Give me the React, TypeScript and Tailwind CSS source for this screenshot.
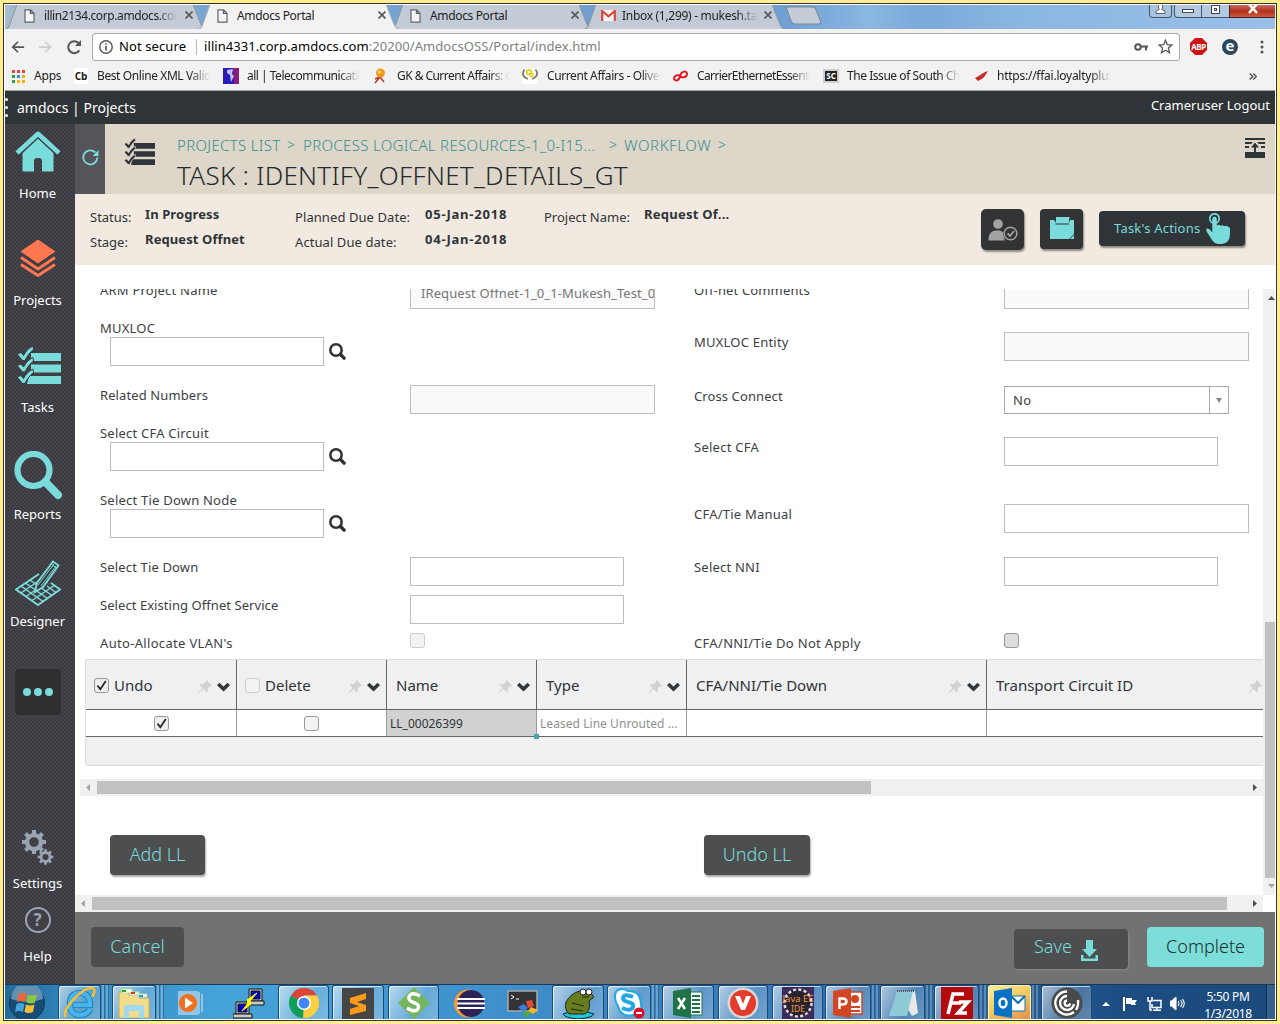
import React from 'react';

type Kids = { children?: React.ReactNode };

const Doc = () => (
  <svg className="shrink-0" width="11" height="14" viewBox="0 0 11 14" fill="#f4f4f4" stroke="#5f6368" strokeWidth="1.2">
    <path d="M1 .8h5.6L10 4.2v9H1zM6.4 1v3.4H10" />
  </svg>
);

const Gmail = () => (
  <svg className="shrink-0" width="15" height="11" viewBox="0 0 15 11">
    <path d="M1 0h13v11H1z" fill="#f5f5f5" />
    <path d="M1.2 11V1l6.3 5.4L13.8 1v10" fill="none" stroke="#d54b3d" strokeWidth="2.2" />
  </svg>
);

function Tab({ title, width, active, icon, className, titleClass }: { title: string; width: string; active?: boolean; icon?: React.ReactNode; className?: string; titleClass: string }) {
  return (
    <div className={`relative h-full shrink-0 ${width} ${active ? 'z-10' : ''} ${className ?? ''}`}>
      <svg className="absolute inset-0 h-full w-full" viewBox="0 0 200 24" preserveAspectRatio="none">
        <path d="M-1 24.5C4 24 4 21 6 16L12 -1H186L193 17C195 22 196 24 201 24.5" fill={active ? '#f2f2f2' : '#c3ccd6'} stroke={active ? '#aab3bd' : '#8f9aa6'} strokeWidth="1" />
      </svg>
      <div className="relative flex h-[21px] items-center pl-[19px]">
        {icon ?? <Doc />}
        <span className={`overflow-hidden whitespace-nowrap text-[12px] leading-[20px] text-[#222] ${titleClass}`}>{title}</span>
        <svg className="absolute right-[14px] top-[6px]" width="8" height="8" viewBox="0 0 8 8" stroke="#5a5a5a" strokeWidth="1.7">
          <path d="M.5.5l7 7M7.500.5l-7 7" />
        </svg>
      </div>
    </div>
  );
}

function TabStrip() {
  return (
    <div className="relative flex h-[24px] shrink-0 overflow-hidden bg-[linear-gradient(90deg,#a9bccb_0,#7fa9d3_4%,#6c9bd0_60%,#8ab6e2_68%,#7ba9d8_72%,#8ab6e2_80%,#9ac0e8_100%)]">
      <Tab title="illin2134.corp.amdocs.com" width="w-[202px]" className="ml-[0px]" titleClass="ml-[9px] w-[133px] tracking-[-0.4px] [mask-image:linear-gradient(90deg,#000_85%,transparent)]" />
      <Tab title="Amdocs Portal" width="w-[202px]" active className="ml-[-9px]" titleClass="ml-[9px] tracking-[-0.35px]" />
      <Tab title="Amdocs Portal" width="w-[202px]" className="ml-[-9px]" titleClass="ml-[9px] tracking-[-0.35px]" />
      <Tab title="Inbox (1,299) - mukesh.tan" width="w-[202px]" className="ml-[-9px]" icon={<span className="ml-[-2px]"><Gmail /></span>} titleClass="ml-[6px] w-[136px] tracking-[-0.3px] [mask-image:linear-gradient(90deg,#000_85%,transparent)]" />
      <svg className="ml-[-1px] mt-[1px]" width="37" height="19" viewBox="0 0 35 18">
        <path d="M1 1h25q2 0 3 2l5 12q0 2-2 2H9q-2 0-3-2z" fill="#c3ccd6" stroke="#76889b" />
      </svg>
      <div className="ml-auto flex h-[13px] text-white">
        <div className="flex w-[23px] justify-center rounded-b border border-t-0 border-[#44566b] bg-[#a9c2de]">
          <svg width="11" height="9" viewBox="0 0 11 9" fill="#fff" stroke="#445" strokeWidth=".8"><path d="M3.500-1h4v4l-.8 1.500L10 6v2.500H1V6l3.300-1.500L3.500 3z" /></svg>
        </div>
        <div className="ml-[2px] flex w-[28px] justify-center rounded-bl border border-t-0 border-[#44566b] bg-[#b3c9e0] pt-[4px]">
          <div className="h-[4px] w-[12px] border border-[#445] bg-white" />
        </div>
        <div className="flex w-[27px] justify-center border-b border-[#44566b] bg-[#b3c9e0]">
          <div className="h-[9px] w-[9px] border border-[#445] bg-white p-[2px]"><div className="h-full w-full border border-[#445]" /></div>
        </div>
        <div className="flex w-[46px] justify-center border-b border-l border-[#44202b] bg-[linear-gradient(#c77063,#b4301c_50%,#cf5a3c)]">
          <svg width="12" height="9" viewBox="0 0 12 9" stroke="#fff" strokeWidth="2.6"><path d="M2-1l8 9M10-1L2 8" /></svg>
        </div>
      </div>
    </div>
  );
}

function Toolbar() {
  return (
    <div className="flex h-[33px] shrink-0 items-center bg-[#f2f2f2] pt-[2px]">
      <svg className="ml-[6px]" width="14" height="14" viewBox="0 0 16 14" fill="none" stroke="#555" strokeWidth="2"><path d="M15 7H2M8 1L2 7l6 6" /></svg>
      <svg className="ml-[14px]" width="14" height="14" viewBox="0 0 16 14" fill="none" stroke="#ccc" strokeWidth="2"><path d="M0 7h13M7 1l6 6-6 6" /></svg>
      <svg className="ml-[13px]" width="16" height="16" viewBox="0 0 16 16" fill="none" stroke="#555" strokeWidth="2"><path d="M13.300 11.400A6 6 0 1 1 12.600 4" /><path d="M15 1v6H9z" fill="#555" stroke="none" /></svg>
      <div className="ml-[10px] flex h-[28px] w-[1088px] items-center rounded-[3px] border border-[#a9a9a9] bg-white text-[13px]">
        <svg className="ml-[6px]" width="14" height="14" viewBox="0 0 14 14" fill="none" stroke="#555" strokeWidth="1.400"><circle cx="7" cy="7" r="6.200" /><path d="M7 6v4.500M7 3.200v1.500" strokeWidth="1.700" /></svg>
        <span className="ml-[6px] tracking-[0.1px] text-black">Not secure</span>
        <span className="ml-[10px] h-[16px] w-px bg-[#bbb]" />
        <span className="ml-[7px] whitespace-nowrap tracking-[0.06px] text-black">illin4331.corp.amdocs.com<span className="text-[#808080]">:20200/AmdocsOSS/Portal/index.html</span></span>
        <svg className="ml-auto" width="14" height="8" viewBox="0 0 14 8" fill="none" stroke="#555" strokeWidth="2"><circle cx="4" cy="4" r="2.800" /><path d="M7 3.500h7M12 3.500v4" /></svg>
        <svg className="ml-[10px] mr-[6px]" width="15" height="15" viewBox="0 0 15 15" fill="none" stroke="#555" strokeWidth="1.300"><path d="M7.500 1.300l1.800 4.300 4.600.4-3.500 3.100 1.100 4.600-4-2.500-4 2.500 1.100-4.600L1.100 6l4.600-.4z" /></svg>
      </div>
      <div className="ml-[10px] flex h-[17px] w-[17px] items-center justify-center bg-[#cf1212] text-[8px] font-bold tracking-[-0.4px] text-white [clip-path:polygon(30%_0,70%_0,100%_30%,100%_70%,70%_100%,30%_100%,0_70%,0_30%)]">ABP</div>
      <div className="ml-[15px] flex h-[16px] w-[16px] items-center justify-center rounded-full bg-[#2b475c] pb-[3px] text-[15px] font-bold leading-none text-white">e</div>
      <svg className="ml-[22px]" width="4" height="14" viewBox="0 0 4 14" fill="#555"><circle cx="2" cy="2" r="1.500" /><circle cx="2" cy="7" r="1.500" /><circle cx="2" cy="12" r="1.500" /></svg>
    </div>
  );
}

function Bookmark({ icon, width, children, text }: { icon: React.ReactNode; width: string; text: string } & Kids) {
  return (
    <div className={`flex shrink-0 items-center ${width}`}>
      <span className="flex w-[16px] shrink-0 items-center justify-center">{icon}</span>
      <span className={`ml-[8px] overflow-hidden whitespace-nowrap ${text}`}>{children}</span>
    </div>
  );
}

const fade = '[mask-image:linear-gradient(90deg,#000_82%,transparent)]';

function Bookmarks() {
  const dots = ['#e8453c', '#e8453c', '#e8453c', '#31a350', '#4285f4', '#f4b400', '#31a350', '#f4b400', '#f4b400'];
  return (
    <div className="flex h-[29px] shrink-0 items-center border-b border-[#a0a0a0] bg-[#f2f2f2] pl-[5px] text-[12px] leading-[16px] text-[#222]">
      <Bookmark width="w-[63px]" text="tracking-[-0.2px]" icon={<span className="grid grid-cols-3 gap-[2px]">{dots.map((c, i) => <i key={i} className="h-[3px] w-[3px]" style={{ background: c }} />)}</span>}>Apps</Bookmark>
      <Bookmark width="w-[150px]" text={`w-[113px] tracking-[-0.4px] ${fade}`} icon={<span className="h-[16px] bg-white px-px text-[10px] font-bold leading-[16px]">Cb</span>}>Best Online XML Validator</Bookmark>
      <Bookmark width="w-[149px]" text={`w-[113px] tracking-[-0.5px] ${fade}`} icon={<svg width="16" height="16"><path d="M0 0h16v16H0z" fill="#2d1cb4" /><path d="M10 0h6v16h-5z" fill="#8b1c7c" /><path d="M4 2l6-1-1 5 2 2-3 6-1-7-3-2z" fill="#b9c3ff" /></svg>}>all | Telecommunications</Bookmark>
      <Bookmark width="w-[150px]" text={`ml-[9px] w-[112px] tracking-[-0.55px] ${fade}`} icon={<svg width="14" height="16" fill="none"><path d="M2 11l5-2 4 5M7 9l-5 6" stroke="#b93a2e" strokeWidth="1.600" /><circle cx="7.500" cy="5" r="4.500" fill="#f29a20" /><circle cx="6.500" cy="4" r="1.500" fill="#ffd76b" /></svg>}>GK &amp; Current Affairs: G</Bookmark>
      <Bookmark width="w-[150px]" text={`ml-[9px] w-[114px] tracking-[-0.4px] ${fade}`} icon={<svg width="16" height="16" fill="none"><path d="M0 0h16v16H0z" fill="#fff" /><path d="M2.500 1.500C-1 6 2 10 6 11M13.500 1.500c3.500 4.500.5 8.500-3.500 9.500" stroke="#75795c" strokeWidth="1.800" /><circle cx="7" cy="4" r="2.200" stroke="#e9cb1a" strokeWidth="1.800" /><circle cx="9.500" cy="7" r="1.700" stroke="#e9cb1a" strokeWidth="1.400" /></svg>}>Current Affairs - Oliveboard</Bookmark>
      <Bookmark width="w-[151px]" text={`ml-[9px] w-[113px] tracking-[-0.6px] ${fade}`} icon={<svg width="16" height="12" fill="none" stroke="#e2131b" strokeWidth="1.900"><path d="M8 6c-3-2-6 0-6 2.500S7 12 8 6c1-5 7-6 7-2S9 8 8 6z" /></svg>}>CarrierEthernetEssentials</Bookmark>
      <Bookmark width="w-[150px]" text={`w-[113px] tracking-[-0.45px] ${fade}`} icon={<span className="bg-[#222] px-[1px] text-[8px] font-bold leading-[10px] text-white outline outline-2 outline-[#d0d0d0]">SC</span>}>The Issue of South China</Bookmark>
      <Bookmark width="w-[150px]" text={`w-[114px] tracking-[-0.25px] ${fade}`} icon={<svg width="13" height="12"><path d="M13 1C9 2 6 5 0 8l3 3c4-2 7-4 8-7z" fill="#cc2a28" /></svg>}>https://ffai.loyaltyplus.aero</Bookmark>
      <svg className="ml-auto mr-[18px]" width="8" height="7" viewBox="0 0 8 7" fill="none" stroke="#555" strokeWidth="1.500"><path d="M.7.500l3 3-3 3M4.300.500l3 3-3 3" /></svg>
    </div>
  );
}

const Checklist = ({ w, h, color, back }: { w: number; h: number; color: string; back: string }) => (
  <svg width={w} height={h} viewBox="0 0 44 38">
    <path d="M14 7h30v8H14zM14 18.500h30v8H14zM12 30h32v8H10z" fill={color} />
    {[0, 11.500, 23].map((y) => (
      <path key={y} d={`M0 ${y + 8}l4-1.500 2.500 3C9 ${y + 5} 11.500 ${y + 2} 16 ${y}l.5 3.500C13 ${y + 6.500} 10 ${y + 10} 8 ${y + 14.500}H5.500z`} fill={color} stroke={back} strokeWidth="1" />
    ))}
  </svg>
);

function SideItem({ label, children }: { label: string } & Kids) {
  return (
    <div className="flex h-[107px] w-full shrink-0 flex-col items-center">
      <div className="flex h-[59px] items-center justify-center">{children}</div>
      <div className="text-[13px] leading-[20px] text-white">{label}</div>
    </div>
  );
}

const AQUA = '#7adcda';

function Gear({ cx, cy, r }: { cx: number; cy: number; r: number }) {
  return (
    <g transform={`translate(${cx} ${cy})`}>
      <circle r={r * 0.58} fill="none" stroke="#9aa3b1" strokeWidth={r * 0.36} />
      {[0, 45, 90, 135, 180, 225, 270, 315].map((a) => (
        <rect key={a} x={-r * 0.17} y={-r} width={r * 0.34} height={r * 0.36} fill="#9aa3b1" transform={`rotate(${a})`} />
      ))}
    </g>
  );
}

function Sidebar() {
  return (
    <nav className="flex w-[70px] shrink-0 flex-col items-center bg-[#3b3a40] bg-[radial-gradient(#45444b_0.8px,transparent_1px),radial-gradient(#45444b_0.8px,transparent_1px)] bg-[length:4px_4px] bg-[position:0_0,2px_2px] pr-[5px]">
      <div className="flex w-[65px] flex-1 flex-col items-center">
        <SideItem label="Home">
          <svg className="mt-[-5px]" width="46" height="41" viewBox="0 0 46 41" fill={AQUA}>
            <path d="M7.500 21L23 7l15.500 14v18.500q0 1-1 1H27V30q0-3-3-3h-2q-3 0-3 3v10.500H8.500q-1 0-1-1z" />
            <path d="M1 25L23 4.500l22 20.500" fill="none" stroke="#3b3a40" strokeWidth="4.500" />
            <path d="M2 22L23 2.800 44 22" fill="none" stroke={AQUA} strokeWidth="4.600" strokeLinejoin="round" />
          </svg>
        </SideItem>
        <SideItem label="Projects">
          <svg className="mt-[-6px]" width="36" height="38" viewBox="0 0 36 38">
            <path d="M18 .5l17.500 12L18 24.500.5 12.500z" fill="#ff7850" />
            <path d="M1 18.500L18 30l17-11.500M1 25.500L18 36.500l17-11" fill="none" stroke="#ff7850" strokeWidth="3" />
          </svg>
        </SideItem>
        <SideItem label="Tasks"><div className="mt-[-6px] pl-[2px]"><Checklist w={44} h={38} color={AQUA} back="#3b3a40" /></div></SideItem>
        <SideItem label="Reports">
          <svg className="ml-[1px] mt-[2px]" width="49" height="49" viewBox="0 0 49 49" fill="none" stroke={AQUA}>
            <circle cx="19.500" cy="19" r="16" strokeWidth="6.200" /><path d="M31.500 31l12.500 13" strokeWidth="8" strokeLinecap="round" />
          </svg>
        </SideItem>
        <SideItem label="Designer">
          <svg className="mt-[3px]" width="46" height="46" viewBox="0 0 46 46" fill="none" stroke={AQUA} strokeWidth="1.500">
            <path d="M24 14L1 29.500l22 15.500 22-15.500-9-6.500" strokeWidth="1.900" />
            <path d="M6 26l22 15.500M10.500 23l22 15.500M15 20l22 15.500M32 26l9 6.500M6 33l19-13M11 36.500l22-15M17 40.500l23-15.500" />
            <path d="M20 32l2-9L38 1.500l5.500 4L28 27z" fill="#3b3a40" strokeWidth="1.900" /><path d="M23 25L39 4M36 4l5.500 4M26 26L41 6" strokeWidth="1" />
          </svg>
        </SideItem>
        <div className="mt-[10px] flex h-[46px] w-[46px] shrink-0 items-center justify-center gap-[3px] rounded-[4px] bg-[#2f2f31]">
          {[0, 1, 2].map((i) => <span key={i} className="h-[8px] w-[8px] rounded-full bg-[#7adcda]" />)}
        </div>
        <svg className="mt-[115px] shrink-0" width="32" height="36" viewBox="0 0 32 36"><Gear cx={12} cy={12} r={12} /><Gear cx={23.500} cy={27} r={7.800} /></svg>
        <div className="mt-[7px] text-[13px] leading-[20px] text-white">Settings</div>
        <div className="mt-[14px] flex h-[26px] w-[26px] shrink-0 items-center justify-center rounded-full border-2 border-[#9aa3b1] text-[17px] font-bold text-[#9aa3b1]">?</div>
        <div className="mt-[13px] text-[13px] leading-[20px] text-white">Help</div>
      </div>
    </nav>
  );
}

function TaskHeader() {
  return (
    <div className="flex h-[70px] shrink-0 bg-[#ded6c8]">
      <div className="flex w-[30px] items-center justify-center bg-[#55545a] pb-[4px]">
        <svg width="17" height="17" viewBox="0 0 17 17" fill="none" stroke={AQUA} strokeWidth="1.800"><path d="M15.300 8.500a7 7 0 1 1-2-5" /><path d="M16.500 1v6h-6z" fill={AQUA} stroke="none" /></svg>
      </div>
      <div className="ml-[19px] mt-[14px] shrink-0"><Checklist w={31} h={27} color="#2f3438" back="#ded6c8" /></div>
      <div className="ml-[22px] flex-1 whitespace-nowrap">
        <div className="mt-[11px] flex text-[15px] font-light leading-[20px] text-[#358f91]">
          <span className="w-[110px] tracking-[0.33px]">PROJECTS LIST</span>
          <span className="w-[16px] text-[14px]">&gt;</span>
          <span className="w-[306px] tracking-[0.33px]">PROCESS LOGICAL RESOURCES-1_0-I15...</span>
          <span className="w-[15px] text-[14px]">&gt;</span>
          <span className="w-[94px] tracking-[0.6px]">WORKFLOW</span>
          <span className="text-[14px]">&gt;</span>
        </div>
        <h1 className="mt-[2px] text-[26px] font-light leading-[36px] tracking-[0.3px] text-[#24292d]">TASK : IDENTIFY_OFFNET_DETAILS_GT</h1>
      </div>
      <svg className="mr-[10px] mt-[14px] shrink-0" width="20" height="20" viewBox="0 0 20 20" fill="#2f3438"><path d="M0 0h20v2H0zM0 4h8l-2 2H0zM12 4h8v2h-6zM0 8h4v2H0zM16 8h4v2h-4zM0 14h20v6H0zM10 4.500l4 5h-3V14H9V9.500H6z" /></svg>
    </div>
  );
}

function InfoBar() {
  return (
    <div className="flex h-[71px] shrink-0 whitespace-nowrap bg-[#f2eae0] pl-[15px] pt-[8px] text-[13px] text-[#2f3438]">
      <div className="w-[55px] pt-[3px] leading-[25px]"><div>Status:</div><div>Stage:</div></div>
      <div className="w-[150px] font-bold leading-[25px] tracking-[0.1px]"><div>In Progress</div><div>Request Offnet</div></div>
      <div className="w-[130px] pt-[3px] leading-[25px] tracking-[0.08px]"><div>Planned Due Date:</div><div>Actual Due date:</div></div>
      <div className="w-[119px] font-bold leading-[25px] tracking-[0.8px]"><div>05-Jan-2018</div><div>04-Jan-2018</div></div>
      <div className="w-[100px] pt-[3px] leading-[25px]">Project Name:</div>
      <div className="flex-1 font-bold leading-[25px] tracking-[0.25px]">Request Of...</div>
      <div className="mr-[30px] mt-[7px] flex items-start">
        <div className="flex h-[41px] w-[43px] items-center justify-center rounded-[5px] bg-[#323335] shadow-[1px_2px_2px_#8d8880]">
          <svg width="30" height="22" viewBox="0 0 30 22"><circle cx="10" cy="5" r="4.800" fill="#a3a3a3" /><path d="M.5 21.500c0-7 3-9.500 7-10h4c4 1 5 3 5 10z" fill="#a3a3a3" /><circle cx="22.500" cy="14.500" r="7.500" fill="#323335" /><circle cx="22.500" cy="14.500" r="6.300" fill="none" stroke="#a3a3a3" strokeWidth="1.500" /><path d="M19.500 14.500l2.500 2.500 4-5" stroke="#a3a3a3" strokeWidth="1.800" fill="none" /></svg>
        </div>
        <div className="ml-[16px] flex h-[40px] w-[43px] items-center justify-center rounded-[4px] bg-[#323335] pb-[2px] shadow-[1px_2px_2px_#8d8880]">
          <svg width="24" height="22" viewBox="0 0 24 22"><path d="M0 3h24v14l-5 5H0z" fill={AQUA} /><path d="M20 22l4-4v4z" fill={AQUA} /><path d="M4.500 3h15.500l-1 4.500H5.500z" fill="#323335" /><path d="M6 0h14l-1 2.500v2l2 2H4l2-2v-2z" fill={AQUA} /></svg>
        </div>
        <div className="ml-[16px] mt-[2px] flex h-[35px] w-[146px] items-center rounded-[4px] bg-[#2f3438] pl-[15px] text-[13px] text-[#7adcda] shadow-[1px_2px_2px_#8d8880]">
          <span className="w-[92px] pt-px tracking-[0.2px]">Task's Actions</span>
          <svg width="24" height="31" viewBox="0 0 24 31" fill={AQUA}><circle cx="8.500" cy="5.500" r="4.700" fill="none" stroke={AQUA} strokeWidth="1.700" /><path d="M6.300 6q0-2.500 2.200-2.500T10.800 6v6.500q2-1.500 3.700.3 2-1.200 3.700.5 2.300-1.300 4 .7 1.800-.5 1.800 2v5q0 9-8 10-7 1-10-4L.6 18.500Q-.5 15 2 15.500q2 .5 4.300 4z" /></svg>
        </div>
      </div>
    </div>
  );
}

const INPUT = 'h-[29px] shrink-0 border border-[#bdbdbd]';

function Row({ label, h, children, text = 'tracking-[0.15px]' }: { label: string; h: string; text?: string } & Kids) {
  return (
    <div className={`flex shrink-0 items-start ${h}`}>
      <label className={`w-[310px] shrink-0 text-[13px] leading-[20px] ${text}`}>{label}</label>
      {children}
    </div>
  );
}

function SearchRow({ label, h }: { label: string; h: string }) {
  return (
    <div className={`shrink-0 ${h}`}>
      <label className="block h-[19px] text-[13px] leading-[20px] tracking-[0.22px]">{label}</label>
      <div className="flex items-center pl-[10px]">
        <div className={`${INPUT} w-[214px] bg-white`} />
        <svg className="ml-[5px] mt-[-1px]" width="17" height="17" viewBox="0 0 17 17" fill="none" stroke="#2f3134"><circle cx="7" cy="7" r="5.700" strokeWidth="2.500" /><path d="M11.500 11.500l3.600 3.600" strokeWidth="3.400" strokeLinecap="round" /></svg>
      </div>
    </div>
  );
}

function Check({ on, tone = 'border-[#a8a8a8] bg-[#eee]' }: { on?: boolean; tone?: string }) {
  return (
    <span className={`flex h-[15px] w-[15px] shrink-0 items-center justify-center rounded-[3px] border ${tone}`}>
      {on && <svg width="11" height="11" viewBox="0 0 11 11" fill="none" stroke="#222" strokeWidth="1.700"><path d="M1.500 5.500l2.800 3.700L9.800 1" /></svg>}
    </span>
  );
}

function Form() {
  return (
    <div className="mt-[-9px] flex h-[379px] shrink-0 pl-[25px] text-[#3c4044]">
      <div className="w-[594px] shrink-0">
        <Row label="ARM Project Name" h="h-[38px]" text="tracking-[0.22px]"><div className={`${INPUT} w-[245px] overflow-hidden whitespace-nowrap bg-[#fafafa] pl-[10px] text-[13px] leading-[25px] tracking-[0.1px] text-[#777]`}>IRequest Offnet-1_0_1-Mukesh_Test_01</div></Row>
        <SearchRow label="MUXLOC" h="h-[67px]" />
        <Row label="Related Numbers" h="h-[38px]" text="tracking-[0.1px]"><div className={`${INPUT} w-[245px] bg-[#fafafa]`} /></Row>
        <SearchRow label="Select CFA Circuit" h="h-[67px]" />
        <SearchRow label="Select Tie Down Node" h="h-[67px]" />
        <Row label="Select Tie Down" h="h-[38px]"><div className={`${INPUT} w-[214px]`} /></Row>
        <Row label="Select Existing Offnet Service" h="h-[38px]" text="tracking-[0.06px]"><div className={`${INPUT} w-[214px]`} /></Row>
        <Row label="Auto-Allocate VLAN's" h="h-[26px]" text="tracking-[0.32px]"><Check tone="border-[#ccc] bg-[#f3f3f3]" /></Row>
      </div>
      <div className="shrink-0">
        <Row label="Off-net Comments" h="h-[52px]"><div className={`${INPUT} w-[245px] bg-[#fafafa]`} /></Row>
        <Row label="MUXLOC Entity" h="h-[54px]" text="tracking-[0.22px]"><div className={`${INPUT} w-[245px] bg-[#fafafa]`} /></Row>
        <Row label="Cross Connect" h="h-[51px]" text="tracking-[0.1px]">
          <div className="flex h-[28px] w-[225px] border border-[#aaa] text-[13px] leading-[27px]">
            <span className="flex-1 pl-[8px] tracking-[0.4px]">No</span>
            <span className="flex w-[19px] items-center justify-center border-l border-[#aaa]"><svg width="6" height="5"><path d="M0 0h6L3 5z" fill="#888" /></svg></span>
          </div>
        </Row>
        <Row label="Select CFA" h="h-[67px]" text="tracking-[0.25px]"><div className={`${INPUT} w-[214px]`} /></Row>
        <Row label="CFA/Tie Manual" h="h-[53px]" text="tracking-[0.22px]"><div className={`${INPUT} w-[245px]`} /></Row>
        <Row label="Select NNI" h="h-[76px]" text="tracking-[0.22px]"><div className={`${INPUT} w-[214px]`} /></Row>
        <Row label="CFA/NNI/Tie Do Not Apply" h="h-[26px]" text="tracking-[0.32px]"><Check tone="border-[#999] bg-[#ddd]" /></Row>
      </div>
    </div>
  );
}

const Pin = () => (
  <svg width="14" height="14" viewBox="0 0 14 14" fill="#d2d2d2"><path d="M8.500 0L14 5.500l-1 1h-1.500L9.500 9l.3 2.500-1 1L5.500 9 .5 13.500 0 13l4.500-5L1.500 5l1-1 2.500.3L8 2V.8z" /></svg>
);

function HeadCell({ label, w, check, last }: { label: string; w: string; check?: React.ReactNode; last?: boolean }) {
  return (
    <div className={`flex shrink-0 items-center pl-[9px] pt-[1px] ${w} ${last ? '' : 'border-r border-[#666]'}`}>
      {check && <span className="ml-[-1px] mr-[5px]">{check}</span>}
      <span className="flex-1 text-[15px] leading-[22px]">{label}</span>
      <span className="mt-[3px]"><Pin /></span>
      {last ? <span className="w-px" /> : <svg className="ml-[5px] mr-[6px] mt-[3px]" width="13" height="10" viewBox="0 0 13 10" fill="none" stroke="#33373a" strokeWidth="3.600"><path d="M1.200 2l5.300 5L11.800 2" /></svg>}
    </div>
  );
}

const CELL = 'shrink-0 flex items-center border-r border-[#999]';

function Table() {
  return (
    <div className="ml-[10px] shrink-0 rounded-l-[3px] border border-r-0 border-[#ddd] bg-[#f0f0f0] text-[#2f3438]">
      <div className="flex h-[50px] border-b border-[#666]">
        <HeadCell label="Undo" w="w-[151px]" check={<Check on tone="border-[#999] bg-[#eee]" />} />
        <HeadCell label="Delete" w="w-[150px]" check={<Check tone="border-[#ccc] bg-[#f3f3f3]" />} />
        <HeadCell label="Name" w="w-[150px]" />
        <HeadCell label="Type" w="w-[150px]" />
        <HeadCell label="CFA/NNI/Tie Down" w="w-[300px]" />
        <HeadCell label="Transport Circuit ID" w="w-[276px]" last />
      </div>
      <div className="relative flex h-[27px] whitespace-nowrap border-b border-[#666] bg-white text-[12px]">
        <div className={`${CELL} w-[151px] justify-center`}><Check on tone="border-[#999] bg-[#eee]" /></div>
        <div className={`${CELL} w-[150px] justify-center`}><Check tone="border-[#999] bg-[#f3f3f3]" /></div>
        <div className={`${CELL} w-[150px] bg-[#d1d1d1] pl-[3px] pt-[1px]`}>LL_00026399</div>
        <div className={`${CELL} w-[150px] pl-[3px] pt-[1px] tracking-[0.05px] text-[#8f8f8f]`}>Leased Line Unrouted ...</div>
        <div className={`${CELL} w-[300px]`} />
        <span className="absolute bottom-[-3px] left-[448px] h-[5px] w-[5px] bg-[#4ba3a3]" />
      </div>
      <div className="h-[28px]" />
    </div>
  );
}

function Arrow({ d, dim }: { d: string; dim?: boolean }) {
  return <svg className="shrink-0" width="7" height="7" viewBox="0 0 7 7" fill={dim ? '#a3a3a3' : '#505050'}><path d={d} /></svg>;
}

function HScroll({ className, thumb }: { className: string; thumb: string }) {
  return (
    <div className={`flex h-[17px] shrink-0 items-center bg-[#f0f0f0] pl-[5px] ${className}`}>
      <Arrow d="M5 0v7L1 3.500z" dim />
      <div className={`ml-[5px] h-[13px] bg-[#c1c1c1] ${thumb}`} />
      <div className="ml-auto mr-[4px] flex"><Arrow d="M1 0v7l4-3.500z" /></div>
    </div>
  );
}

const BTN = 'flex items-center rounded-[4px] text-[18px] font-light leading-[20px] pb-[3px]';

function Content() {
  return (
    <div className="flex h-[647px] shrink-0 bg-white pt-[24px]">
      <div className="flex w-[1188px] shrink-0 flex-col overflow-hidden">
        <Form />
        <Table />
        <HScroll className="ml-[5px] mt-[13px]" thumb="w-[774px]" />
        <div className="mt-[39px] flex shrink-0 pl-[35px]">
          <div className={`${BTN} h-[40px] w-[95px] justify-center bg-[#4d4e50] text-[#7adcda] shadow-[1px_2px_2px_#aaa]`}>Add LL</div>
          <div className={`${BTN} ml-[499px] h-[40px] w-[106px] justify-center bg-[#4d4e50] text-[#7adcda] shadow-[1px_2px_2px_#aaa]`}>Undo LL</div>
        </div>
        <HScroll className="mt-auto" thumb="w-[1135px]" />
      </div>
      <div className="mb-[17px] flex w-[12px] shrink-0 flex-col items-end overflow-hidden bg-[#f0f0f0]">
        <div className="mt-[5px] h-[7px]"><Arrow d="M0 6h7L3.500 2z" /></div>
        <div className="mt-[321px] h-[256px] w-[10px] bg-[#c1c1c1]" />
        <div className="mt-[5px]"><Arrow d="M0 1h7L3.500 5z" dim /></div>
      </div>
    </div>
  );
}

function Footer() {
  return (
    <div className="flex h-[72px] shrink-0 items-start bg-[#727272] px-[16px] pt-[15px]">
      <div className={`${BTN} h-[40px] w-[93px] justify-center bg-[#4d4e50] text-[#7adcda]`}>Cancel</div>
      <div className={`${BTN} ml-auto mt-[2px] h-[40px] w-[114px] bg-[#4d4e50] pl-[20px] text-[#7adcda] shadow-[1px_1px_2px_#888]`}>
        <span className="w-[47px] pb-[3px]">Save</span>
        <svg className="mt-[6px]" width="17" height="21" viewBox="0 0 17 21" fill={AQUA}><path d="M5 0h7v9h4l-7.500 8L1 9h4zM0 15h2.500v3.500h12V15H17v6H0z" /></svg>
      </div>
      <div className={`${BTN} ml-[19px] mr-[-5px] h-[40px] w-[117px] justify-center bg-[#7dded9] text-[#1c2e32]`}>Complete</div>
    </div>
  );
}

function Slot({ w, on, ml, children }: { w: string; on?: boolean; ml: string } & Kids) {
  return (
    <div className={`flex h-[35px] shrink-0 items-center justify-center overflow-hidden rounded-t-[3px] border border-b-0 ${w} ${ml} ${on ? 'border-[#1b4b78] bg-[linear-gradient(120deg,#ffffffa0,#ffffff30_60%,#ffffff50)] shadow-[inset_1px_1px_0_#ffffffa0]' : 'border-transparent'}`}>
      {children}
    </div>
  );
}

const Stack = ({ n }: { n: number }) => (
  <span className="flex h-[35px] w-[10px] shrink-0 gap-[1px] pl-[1px]">
    {Array.from({ length: n }, (_, i) => <i key={i} className="h-full w-[3px] border-r border-[#1b4b78b0] bg-[#ffffff40]" />)}
  </span>
);

function Taskbar() {
  return (
    <div className="flex h-[35px] shrink-0 overflow-hidden border-t border-[#173b5c] bg-[linear-gradient(90deg,#226b99_0,#2f86bd_5%,#46a3d8_17%,#3e8fcb_40%,#3579b9_60%,#24609c_78%,#1d4d82_88%,#1c4a7c_100%)]">
      <Slot w="w-[44px]" ml="ml-[0px]">
        <svg width="36" height="36" viewBox="0 0 36 36"><circle cx="18" cy="18" r="17.500" fill="#174c77" stroke="#153a5a" /><path d="M2 14a16 16 0 0 1 32 0q-16 6-32 0z" fill="#78a3bd" opacity=".8" /><path d="M10 9q4-2 7.500 0l-1.500 8q-4-2-8 0z" fill="#f0652f" /><path d="M19 9.500q4 2 9 0l-2 8q-4 2-8.500 0z" fill="#8cc63f" /><path d="M7.500 19q4-2 8 0L14 27q-4-2-8 0z" fill="#43a5dc" /><path d="M17 19.500q4 2 8.500 0L24 27q-4 2-8.500 0z" fill="#fbc02d" /></svg>
      </Slot>
      <Slot w="w-[43px]" ml="ml-[9px]" on>
        <svg width="32" height="32" viewBox="0 0 32 32" fill="none"><path d="M26 22q-3 6-10 6Q6 28 6 17T16 6q10 0 10 12H10" stroke="#1f78b8" strokeWidth="6.200" /><path d="M26 22q-3 6-10 6Q6 28 6 17T16 6q10 0 10 12H10" stroke="#48b4ee" strokeWidth="4.400" /><path d="M2 30C-4 24 18 0 28 1q5 1 0 9" stroke="#f5bf35" strokeWidth="2.500" /></svg>
      </Slot>
      <Stack n={2} />
      <Slot w="w-[44px]" ml="ml-[1px]" on>
        <svg width="32" height="30" viewBox="0 0 32 30"><path d="M1 4h9l1 3h9l1 3h10v20H1z" fill="#f1dc8c" stroke="#cfae55" /><path d="M4 1h10v4H4zM12 4h9v3h-9zM20 6h9v3h-9z" fill="#fff" stroke="#bda" /><path d="M4 2h4v2H4z" fill="#2a2" /><path d="M13 4h4v2h-4z" fill="#d32" /><path d="M21 7h4v2h-4z" fill="#29d" /><path d="M6 30V20q0-3 3-3h14q3 0 3 3v10h-5v-7H11v7z" fill="#a2d9ef" /></svg>
      </Slot>
      <Stack n={2} />
      <Slot w="w-[46px]" ml="ml-[1px]">
        <svg width="27" height="26" viewBox="0 0 27 26"><path d="M1 1h20v24H1z" fill="#94c5e3" /><path d="M22 2v22M25 4v18" stroke="#a9d3ea" strokeWidth="1.500" /><circle cx="11" cy="13" r="9" fill="#f0701e" /><path d="M8 7.500l8 5.500-8 5.500z" fill="#fff" /></svg>
      </Slot>
      <Slot w="w-[50px]" ml="ml-[11px]">
        <svg width="32" height="31" viewBox="0 0 32 31" stroke="#111"><path d="M16 1h13v12H16z" fill="#d4d4d4" /><path d="M18 3h9v8h-9z" fill="#00c" /><path d="M13 13h18v4H13z" fill="#c8c8c8" /><path d="M3 14h13v12H3z" fill="#d4d4d4" /><path d="M5 16h9v8H5z" fill="#00c" /><path d="M0 26h19v4H0z" fill="#c8c8c8" /><path d="M24 5l-7 8 1 3-9 7 6-8-1-3z" fill="#ff0" stroke="#ff0" /></svg>
      </Slot>
      <Slot w="w-[51px]" ml="ml-[4px]" on>
        <svg width="30" height="30" viewBox="0 0 30 30"><path d="M15 15L2 7.500A15 15 0 0 1 28 7.500H15z" fill="#db4437" /><path d="M15 15L2 7.500A15 15 0 0 0 14 30l7-12z" fill="#0f9d58" /><path d="M15 15l-1 15A15 15 0 0 0 28 7.500H15z" fill="#fdce40" /><circle cx="15" cy="15" r="7" fill="#fff" /><circle cx="15" cy="15" r="5.500" fill="#4285f4" /></svg>
      </Slot>
      <Slot w="w-[52px]" ml="ml-[3px]" on>
        <svg width="32" height="32" viewBox="0 0 32 32"><path d="M0 1h32v31H0z" fill="#454545" /><path d="M8 11l16-5v6l-9 3 9 3v6L8 28v-6l9-3-9-3z" fill="#ff9a1a" /></svg>
      </Slot>
      <Slot w="w-[51px]" ml="ml-[4px]" on>
        <svg width="32" height="32" viewBox="0 0 32 32" fill="none"><path d="M16 0l16 16-16 16L0 16z" fill="#75b55e" /><path d="M22 9q-9-5-11 1-1 4 6 6 5 2 3 6-3 4-11-1" stroke="#fff" strokeWidth="3.500" /></svg>
      </Slot>
      <Slot w="w-[52px]" ml="ml-[4px]">
        <svg width="32" height="29" viewBox="0 0 32 29"><circle cx="15" cy="14.500" r="14" fill="#f29b38" /><circle cx="18" cy="14.500" r="13.500" fill="#2c2255" /><path d="M4 10h28M4 14.500h28M4 19h28" stroke="#fff" strokeWidth="2" /></svg>
      </Slot>
      <Slot w="w-[52px]" ml="ml-[2px]">
        <svg width="32" height="28" viewBox="0 0 32 28"><path d="M1 2h29v20H1z" fill="#333" stroke="#aaa" strokeWidth="1.500" /><path d="M4 6l3 2-3 2M9 10h3" stroke="#fff" fill="none" /><path d="M11 18l6-3 4 4-5 4z" fill="#3a7fe0" /><path d="M19 12l6-1 2 6-6 2z" fill="#e24a35" /><path d="M24 18l7 3-5 4-5-3z" fill="#f5b62d" /><path d="M17 22l7 1-3 5-5-2z" fill="#48ad45" /></svg>
      </Slot>
      <Slot w="w-[52px]" ml="ml-[3px]" on>
        <svg width="33" height="31" viewBox="0 0 33 31"><path d="M1 26q15-6 31 0-2 4-16 5Q3 30 1 26z" fill="#1fc8d8" stroke="#123" /><path d="M4 14q5-9 14-11h9l5 6-5 4q2 9-4 13H7Q2 21 4 14z" fill="#697c1e" stroke="#222" /><circle cx="21" cy="4" r="3" fill="#fff" stroke="#222" /><circle cx="27" cy="4" r="3" fill="#fff" stroke="#222" /><path d="M10 15l12 3M9 21l12 2M27 9h-7" stroke="#192c08" /></svg>
      </Slot>
      <Slot w="w-[44px]" ml="ml-[3px]" on>
        <svg width="31" height="31" viewBox="0 0 31 31" fill="none"><path d="M1 8q0-7 7-7 4 0 6 2 12-1 13 13 2 11-8 11-12 3-15-9Q1 14 1 8z" fill="#fff" stroke="#23a9e1" strokeWidth="2" /><path d="M19 9q-9-4-10 1 0 3 5 4 6 1 5 5-2 5-11 1" stroke="#23a9e1" strokeWidth="4" /><circle cx="25" cy="25" r="5.500" fill="#d7112c" /><path d="M22 25h6" stroke="#fff" strokeWidth="2" /></svg>
      </Slot>
      <Stack n={2} />
      <Slot w="w-[52px]" ml="ml-[1px]" on>
        <svg width="30" height="30" viewBox="0 0 30 30"><path d="M15 4h14v23H15z" fill="#fff" stroke="#207346" /><path d="M19 8h8M19 12h8M19 16h8M19 20h8M19 24h8" stroke="#207346" strokeWidth="2" /><path d="M0 3l18-3v30L0 27z" fill="#207346" /><path d="M5 10l7 11M12 10L5 21" stroke="#fff" strokeWidth="2.500" /></svg>
      </Slot>
      <Slot w="w-[50px]" ml="ml-[4px]" on>
        <svg width="32" height="32" viewBox="0 0 32 32"><circle cx="16" cy="16" r="15.500" fill="#d8d8d8" /><circle cx="16" cy="16" r="13" fill="#e53b2c" /><path d="M8 9h5l3 8 3-8h5l-6 14h-4z" fill="#fff" /></svg>
      </Slot>
      <Slot w="w-[51px]" ml="ml-[4px]" on>
        <svg width="32" height="32" viewBox="0 0 32 32"><path d="M0 0h32v32H0z" fill="#3d2b59" /><circle cx="16" cy="16" r="13.500" fill="#2a2230" stroke="#ddd" strokeWidth="2.500" strokeDasharray="3 2.300" /><text x="16" y="15" textAnchor="middle" fontSize="8.500" textLength="31" lengthAdjust="spacingAndGlyphs" fill="#f39a34">Java EE</text><text x="16" y="25" textAnchor="middle" fontSize="8.500" fill="#f39a34">IDE</text></svg>
      </Slot>
      <Slot w="w-[46px]" ml="ml-[2px]" on>
        <svg width="30" height="30" viewBox="0 0 30 30"><path d="M14 4h15v22H14z" fill="#fff" stroke="#d24625" strokeWidth="1.500" /><circle cx="22" cy="11" r="4" fill="#d24625" /><path d="M18 19h9M18 23h9" stroke="#d24625" strokeWidth="2" /><path d="M0 3l18-3v30L0 27z" fill="#d24625" /><path d="M6.500 21V10.500h3q4 0 4 3t-4 3h-3" stroke="#fff" strokeWidth="2.400" fill="none" /></svg>
      </Slot>
      <Stack n={2} />
      <Slot w="w-[45px]" ml="ml-[-1px]" on>
        <svg width="30" height="28" viewBox="0 0 30 28"><path d="M9 2h18l3 22-6 3z" fill="#e8e8e8" /><path d="M9 2h16l-6 25H1z" fill="#8fcbd6" /><path d="M9 2h17" stroke="#555" strokeWidth="2" strokeDasharray="1 1" /></svg>
      </Slot>
      <Stack n={2} />
      <Slot w="w-[45px]" ml="ml-[-1px]" on>
        <svg width="32" height="32" viewBox="0 0 32 32"><path d="M0 0h32v32H0z" fill="#b30b0b" /><path d="M7 27l5-20h11M9 16h11M18 15h9L17 26h9" fill="none" stroke="#fff" strokeWidth="3.500" /></svg>
      </Slot>
      <Stack n={2} />
      <div className="ml-[-1px] flex h-[35px] w-[43px] shrink-0 items-center justify-center rounded-t-[3px] border border-b-0 border-[#fff3b0] bg-[linear-gradient(150deg,#fff0a0,#f3c75a_50%,#e58e4a)]">
        <svg width="32" height="30" viewBox="0 0 32 30"><path d="M17 8h14v15H17z" fill="#fff" stroke="#0a72c4" /><path d="M17 8l7 7 7-7" fill="none" stroke="#0a72c4" strokeWidth="2" /><path d="M0 3l18-3v30L0 27z" fill="#0a72c4" /><ellipse cx="9" cy="15" rx="3.500" ry="4.500" fill="none" stroke="#fff" strokeWidth="2.400" /></svg>
      </div>
      <Stack n={2} />
      <Slot w="w-[51px]" ml="ml-[0px]" on>
        <svg width="32" height="32" viewBox="0 0 32 32" fill="none" stroke="#fff" strokeWidth="2.300"><circle cx="16" cy="16" r="15.500" fill="#4a4a4a" stroke="none" /><path d="M16 4.500A11.500 11.500 0 1 0 23 25M16 9A7 7 0 1 0 23 17M27 13q1 5-2 10M16 13.500A2.700 2.700 0 1 0 19 16.500" /></svg>
      </Slot>
      <div className="flex flex-1 items-center pl-[10px] text-white">
        <svg width="8" height="4" viewBox="0 0 8 4" className="mt-[4px]"><path d="M0 4l4-4 4 4z" fill="#fff" /></svg>
        <svg className="ml-[13px] mt-[3px]" width="15" height="14" viewBox="0 0 15 14" fill="#fff"><path d="M0 0h2v14H0zM3 1h6v2h5l-2 3 1 2H8V7H3z" /></svg>
        <svg className="ml-[9px] mt-[3px]" width="15" height="14" viewBox="0 0 15 14" fill="none" stroke="#fff" strokeWidth="1.500"><path d="M6 3.500h8v7H5V7M10 11v2M6 13.300h8M1 0v4h4V0M3 4v9h2" /></svg>
        <svg className="ml-[8px] mt-[3px]" width="15" height="13" viewBox="0 0 15 13" fill="none" stroke="#fff" strokeWidth="1.100"><path d="M0 4h2l4-4v13L2 9H0z" fill="#fff" /><path d="M8 4q2 2.500 0 5M10.500 3q3 3.500 0 7M12.500 2q3.500 4.500 0 9" /></svg>
        <div className="ml-[17px] mt-[6px] w-[52px] whitespace-nowrap text-center text-[12px] leading-[17px] tracking-[-0.3px]"><div>5:50 PM</div><div>1/3/2018</div></div>
        <div className="ml-auto h-full w-[9px] border-l border-[#0f2f55] bg-[#ffffff20]" />
      </div>
    </div>
  );
}

export default function App() {
  return (
    <div className="h-[1024px] w-[1280px] overflow-hidden bg-[#ffed8e] p-[3px] font-['Noto_Sans','Open_Sans',sans-serif]">
      <div className="h-[1018px] w-[1274px] border border-[#333] bg-white p-px">
        <div className="flex h-[1014px] w-[1270px] flex-col overflow-hidden">
          <TabStrip />
          <Toolbar />
          <Bookmarks />
          <header className="flex h-[33px] shrink-0 items-center bg-[#2f3438] pr-[5px] text-[13px] text-white">
            <span className="flex flex-col gap-[5px]">{[0, 1, 2].map((i) => <i key={i} className="h-[3px] w-[3px] rounded-full bg-white" />)}</span>
            <span className="ml-[9px] text-[14px]">amdocs | Projects</span>
            <span className="ml-auto pb-[3px]">Crameruser Logout</span>
          </header>
          <div className="flex h-[860px] shrink-0">
            <Sidebar />
            <main className="flex w-[1200px] shrink-0 flex-col">
              <TaskHeader />
              <InfoBar />
              <Content />
              <Footer />
            </main>
          </div>
          <Taskbar />
        </div>
      </div>
    </div>
  );
}
